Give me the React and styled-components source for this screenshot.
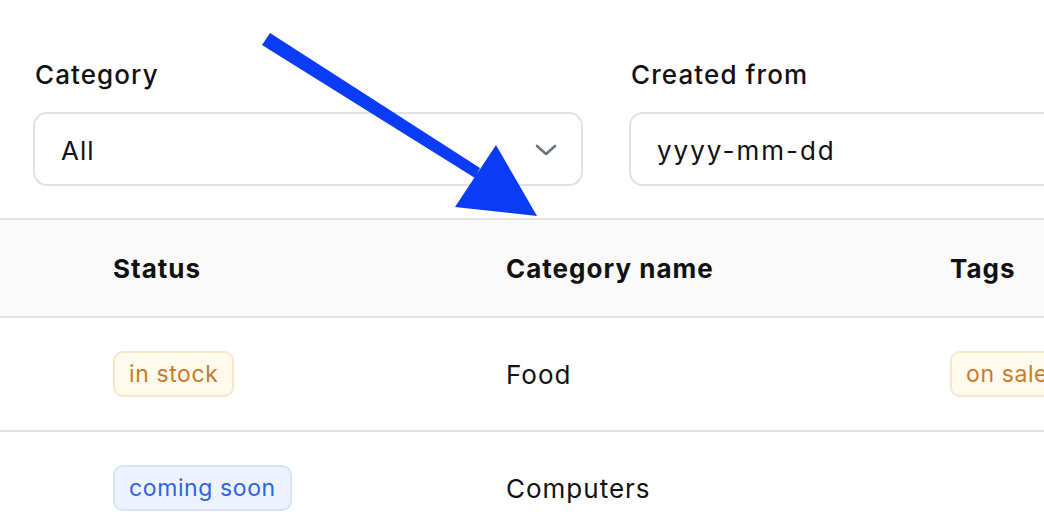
import React from "react"
import styled, { createGlobalStyle } from "styled-components"

const GlobalStyle = createGlobalStyle`
  html, body {
    margin: 0;
    padding: 0;
    background: #ffffff;
    font-family: Inter, "Liberation Sans", sans-serif;
    color: #111111;
    overflow: hidden;
  }
`

const Page = styled.div`
  position: relative;
  width: 1044px;
  height: 518px;
  overflow: hidden;
`

const Filters = styled.div`
  display: grid;
  grid-template-columns: 550px 520px;
  gap: 46px;
  padding: 56px 0 0 33px;
  height: 162px;
  box-sizing: border-box;
`

const Field = styled.div`
  display: flex;
  flex-direction: column;
  gap: 18px;
`

const Label = styled.label`
  font-size: 26px;
  font-weight: 500;
  letter-spacing: 1.1px;
  line-height: 38px;
  padding-left: 2px;
`

const Control = styled.div`
  display: flex;
  align-items: center;
  justify-content: space-between;
  height: 74px;
  box-sizing: border-box;
  padding: 0 24px 0 26px;
  border: 2px solid #e2e2e2;
  border-radius: 14px;
  background: #fff;
  font-size: 26px;
  padding-top: 2px;
  letter-spacing: ${(p) => (p.$mono ? "2px" : "1px")};
`

const Table = styled.div`
  border-top: 2px solid #e3e3e3;
  margin-top: 56px;
`

const Row = styled.div`
  display: grid;
  grid-template-columns: 393px 444px 1fr;
  align-items: center;
  padding-left: 113px;
  height: ${(p) => (p.$head ? "98px" : "114px")};
  background: ${(p) => (p.$head ? "#fafafa" : "#fff")};
  border-bottom: 2px solid #e3e3e3;
  box-sizing: border-box;
  white-space: nowrap;
`

const HeadCell = styled.div`
  font-size: 26px;
  font-weight: 700;
  letter-spacing: 1px;
`

const Cell = styled.div`
  font-size: 26px;
  letter-spacing: 1px;
`

const tones = {
  orange: { bg: "#fefaec", border: "#f8e8cb", color: "#c97a2b" },
  blue: { bg: "#eef4ff", border: "#d7e3fc", color: "#2f63e1" },
}

const Badge = styled.span`
  display: inline-flex;
  align-items: center;
  height: 46px;
  box-sizing: border-box;
  padding: 0 14px;
  border-radius: 10px;
  font-size: 23px;
  letter-spacing: 0.6px;
  background: ${(p) => tones[p.$tone].bg};
  border: 2px solid ${(p) => tones[p.$tone].border};
  color: ${(p) => tones[p.$tone].color};
`

const Arrow = styled.svg`
  position: absolute;
  left: 0;
  top: 0;
  pointer-events: none;
`

const Chevron = () => (
  <svg width="22" height="14" viewBox="0 0 22 14">
    <path d="M2 3 L11 11 L20 3" fill="none" stroke="#6b7280" strokeWidth="2.6" strokeLinecap="round" strokeLinejoin="round" />
  </svg>
)

const rows = [
  { status: "in stock", tone: "orange", name: "Food", tag: "on sale" },
  { status: "coming soon", tone: "blue", name: "Computers" },
]

export default function App() {
  return (
    <Page>
      <GlobalStyle />
      <Filters>
        <Field>
          <Label>Category</Label>
          <Control>
            All
            <Chevron />
          </Control>
        </Field>
        <Field>
          <Label>Created from</Label>
          <Control $mono>yyyy-mm-dd</Control>
        </Field>
      </Filters>
      <Table>
        <Row $head>
          <HeadCell>Status</HeadCell>
          <HeadCell>Category name</HeadCell>
          <HeadCell>Tags</HeadCell>
        </Row>
        {rows.map((r) => (
          <Row key={r.name}>
            <Cell>
              <Badge $tone={r.tone}>{r.status}</Badge>
            </Cell>
            <Cell>{r.name}</Cell>
            <Cell>{r.tag && <Badge $tone="orange">{r.tag}</Badge>}</Cell>
          </Row>
        ))}
      </Table>
      <Arrow width="1044" height="518" viewBox="0 0 1044 518">
        <polygon points="270,33 262,45 475,178 480,168" fill="#0a3cf5" />
        <polygon points="496,145 455,207 537,216" fill="#0a3cf5" />
      </Arrow>
    </Page>
  )
}
